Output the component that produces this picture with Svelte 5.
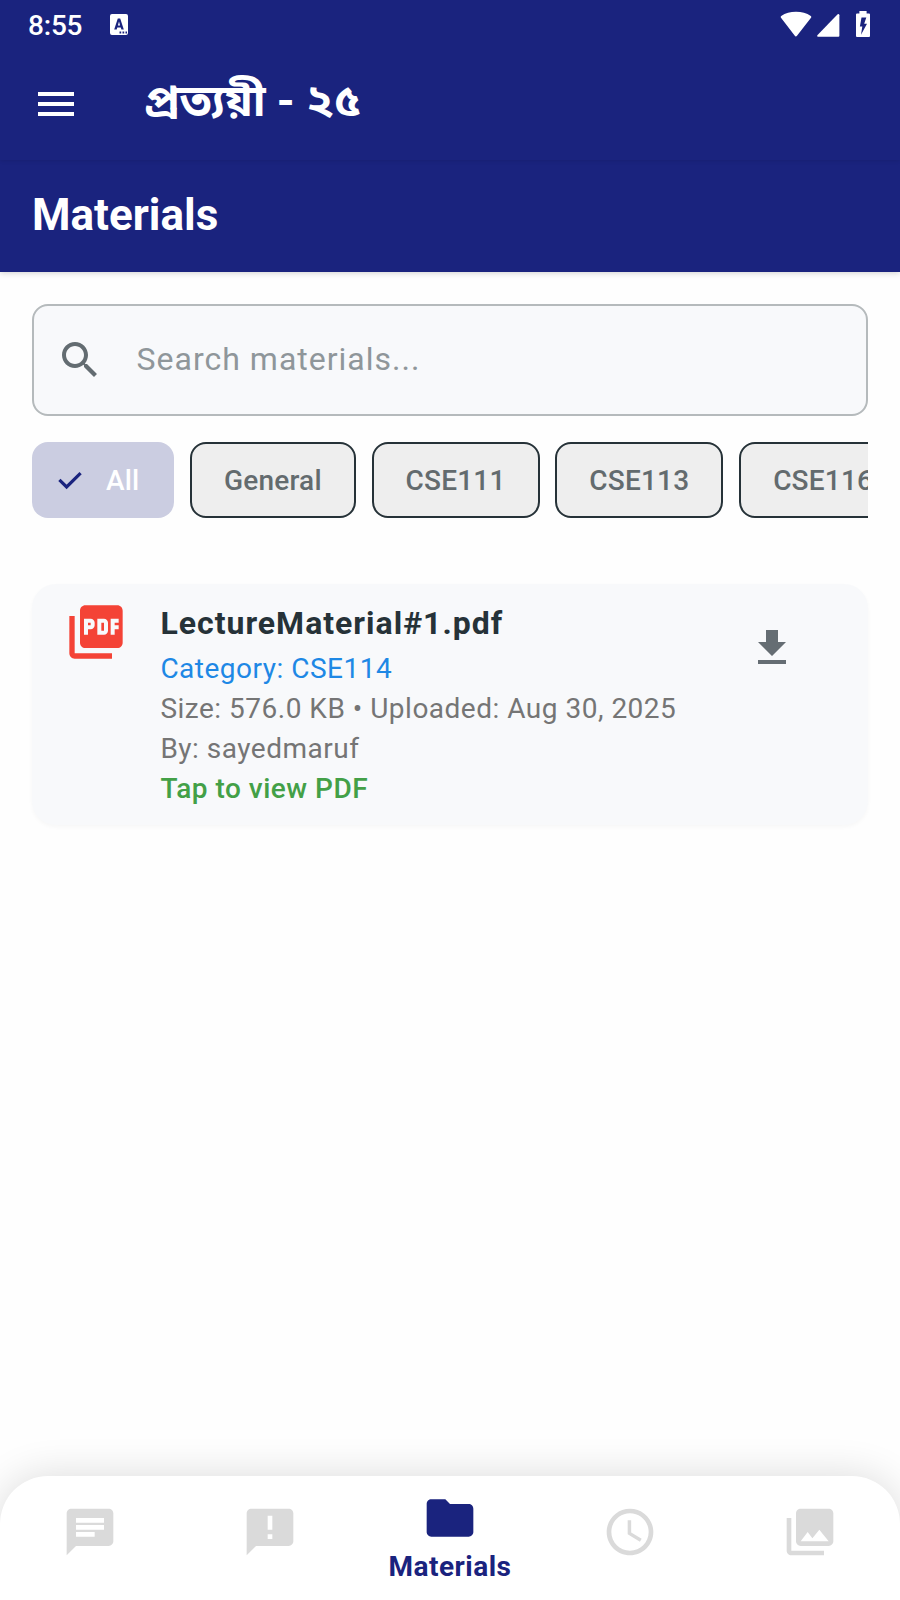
<script>
  let query = $state('');
  let selected = $state('All');
  const categories = ['All', 'General', 'CSE111', 'CSE113', 'CSE116'];
  const tabs = [
    { name: 'Chat', d: 'M20 2H4c-1.1 0-1.99.9-1.99 2L2 22l4-4h14c1.1 0 2-.9 2-2V4c0-1.1-.9-2-2-2zM6 9h12v2H6V9zm8 5H6v-2h8v2zm4-6H6V6h12v2z' },
    { name: 'Notices', d: 'M20 2H4c-1.1 0-1.99.9-1.99 2L2 22l4-4h14c1.1 0 2-.9 2-2V4c0-1.1-.9-2-2-2zm-7 13h-2v-2h2v2zm0-4h-2V5h2v6z' },
    { name: 'Materials', d: 'M10 4H4c-1.1 0-1.99.9-1.99 2L2 18c0 1.1.9 2 2 2h16c1.1 0 2-.9 2-2V8c0-1.1-.9-2-2-2h-8l-2-2z' },
    { name: 'Schedule', d: 'M11.99 2C6.47 2 2 6.48 2 12s4.47 10 9.99 10C17.52 22 22 17.52 22 12S17.52 2 11.99 2zM12 20c-4.42 0-8-3.58-8-8s3.58-8 8-8 8 3.58 8 8-3.58 8-8 8zM12.5 7H11v6l5.25 3.15.75-1.23-4.5-2.67z' },
    { name: 'Gallery', d: 'M22 16V4c0-1.1-.9-2-2-2H8c-1.1 0-2 .9-2 2v12c0 1.1.9 2 2 2h12c1.1 0 2-.9 2-2zm-11-4l2.03 2.71L16 11l4 5H8l3-4zM2 6v14c0 1.1.9 2 2 2h14v-2H4V6H2z' }
  ];
  let active = $state('Materials');
</script>

<div class="screen">
  <div class="appbar">
    <div class="status">
      <span class="time">8:55</span>
      <svg class="ime" width="18" height="21" viewBox="0 0 18 21">
        <path fill="#fff" fill-rule="evenodd" d="M2 0h14a2 2 0 0 1 2 2v17a2 2 0 0 1-2 2H2a2 2 0 0 1-2-2V2a2 2 0 0 1 2-2zM7.8 4.5 4.2 15.5h2.5l.6-2h3.5l.6 2h2.4L10.2 4.5zM9 7.4l1.1 4.1H7.9zM9.5 17.5v2h1.7v-2zm3 0v2h1.7v-2zm3 0v2h1.5v-2z" />
      </svg>
      <div class="signals">
        <svg width="32" height="26" viewBox="0 0 32 26"><path fill="#fff" d="M15.8 25.4Q16.5 25.4 17 24.7L31.2 6.4Q31.6 5.6 30.8 5 24.5.8 16 .8T1.2 5Q.4 5.6.8 6.4L14.8 24.7Q15.2 25.4 15.8 25.4z" /></svg>
        <svg width="23" height="26" viewBox="0 0 23 26"><path fill="#fff" d="M22.4 4.2v20.600a1 1 0 0 1-1 1H1.1Q-.6 25.4.6 24L20.4 3.600q1.6-1.2 2 .6z" /></svg>
        <svg class="battery" width="14" height="26" viewBox="0 0 14 26"><path fill="#fff" fill-rule="evenodd" d="M3.400 0h7.200v2.600H13a1 1 0 0 1 1 1V25a1 1 0 0 1-1 1H1a1 1 0 0 1-1-1V3.600a1 1 0 0 1 1-1h2.400zM5.500 6.500 3.900 15.400h2.400L5 23.800 11 12.800H8.200L10.300 6.500z" /></svg>
      </div>
    </div>
    <div class="toolbar">
      <svg width="48" height="48" viewBox="0 0 24 24"><path fill="#fff" d="M3 18h18v-2H3v2zm0-5h18v-2H3v2zm0-7v2h18V6H3z" /></svg>
      <span class="brand" lang="bn">প্রত্যয়ী - ২৫</span>
    </div>
  </div>

  <header><h1>Materials</h1></header>

  <main>
    <label class="search">
      <svg width="48" height="48" viewBox="0 0 24 24"><path fill="#636c71" d="M15.500 14h-.79l-.28-.27C15.410 12.590 16 11.110 16 9.500 16 5.910 13.090 3 9.500 3S3 5.910 3 9.500 5.910 16 9.500 16c1.610 0 3.090-.59 4.230-1.570l.27.28v.79l5 4.990L20.490 19l-4.990-5zm-6 0C7.010 14 5 11.990 5 9.500S7.010 5 9.500 5 14 7.010 14 9.500 11.990 14 9.500 14z" /></svg>
      <input type="text" placeholder="Search materials..." bind:value={query} />
    </label>

    <div class="chips">
      {#each categories as c}
        <button class="chip" class:on={selected === c} onclick={() => (selected = c)}>
          {#if selected === c}
            <svg width="36" height="36" viewBox="0 0 36 36"><path fill="none" stroke="#1a237e" stroke-width="3.200" d="m7.400 17.900 7.200 7L28.600 11.100" /></svg>
          {/if}
          <span>{c}</span>
        </button>
      {/each}
    </div>

    <article class="card">
      <svg class="pdf" width="64" height="64" viewBox="0 0 24 24"><path fill="#f44336" d="M20 2H8c-1.100 0-2 .9-2 2v12c0 1.100.9 2 2 2h12c1.100 0 2-.9 2-2V4c0-1.100-.9-2-2-2zm-8.500 7.500c0 .83-.67 1.500-1.500 1.500H9v2H7.500V7H10c.83 0 1.500.67 1.500 1.500v1zm5 2c0 .83-.67 1.500-1.500 1.500h-2.500V7H15c.83 0 1.500.67 1.500 1.500v3zm4-3H19v1h1.500V11H19v2h-1.500V7h3v1.500zM9 9.500h1v-1H9v1zM4 6H2v14c0 1.100.9 2 2 2h14v-2H4V6zm10 5.500h1v-3h-1v3z" /></svg>
      <div class="info">
        <h2>LectureMaterial#1.pdf</h2>
        <p class="cat">Category: CSE114</p>
        <p>Size: 576.0 KB • Uploaded: Aug 30, 2025</p>
        <p>By: sayedmaruf</p>
        <p class="tap">Tap to view PDF</p>
      </div>
      <svg class="download" width="48" height="48" viewBox="0 0 24 24"><path fill="#656d73" d="M19 9h-4V3H9v6H5l7 7 7-7zM5 18v2h14v-2H5z" /></svg>
    </article>
  </main>

  <nav>
    {#each tabs as t}
      <button class="tab" class:active={active === t.name} onclick={() => (active = t.name)}>
        <svg width="56" height="56" viewBox="0 0 24 24"><path fill="currentColor" d={t.d} /></svg>
        {#if active === t.name}<span>{t.name}</span>{/if}
      </button>
    {/each}
  </nav>
</div>

<style>
  :global(body) { background: #fefefe; }
  * { box-sizing: border-box; }
  svg { display: block; flex: none; }
  button { border: 0; background: none; padding: 0; font: inherit; }
  .screen {
    width: 900px; height: 1600px; overflow: hidden; display: flex; flex-direction: column;
    font-family: Roboto, 'Noto Sans Bengali', 'Noto Sans', sans-serif; background: #fefefe;
  }
  .appbar { height: 160px; background: #1a237e; color: #fff; box-shadow: 0 1px 4px rgba(0, 0, 0, .1); position: relative; z-index: 2; }
  .status { height: 48px; display: flex; align-items: center; padding: 0 30px 0 28px; }
  .time { font-size: 28px; font-weight: 500; line-height: 48px; padding-top: 3px; width: 82px; letter-spacing: -.2px; }
  .signals { margin-left: auto; display: flex; align-items: center; gap: 5px; padding-bottom: 1px; }
  .battery { margin-left: 11px; }
  .toolbar { display: flex; align-items: center; height: 112px; padding-left: 32px; }
  .brand { margin-left: 64px; padding-bottom: 6px; font-size: 44px; font-weight: 700; line-height: 56px; white-space: nowrap; transform: scaleX(1.034); transform-origin: 0 50%; }
  header { height: 112px; background: #1a237e; color: #fff; padding: 0 32px 2px; display: flex; align-items: center; box-shadow: 0 1px 6px rgba(0, 0, 0, .18); }
  h1 { margin: 0; font-size: 44px; font-weight: 700; line-height: 52px; }
  main { flex: 1; padding: 32px 32px 0; }
  .search { height: 112px; border: 2px solid #b5babc; border-radius: 16px; background: #f8f9fb; display: flex; align-items: center; padding-left: 22px; gap: 32.600px; }
  input { flex: 1; border: 0; outline: 0; background: none; padding: 0 0 2px; font: 400 32px/48px Roboto, sans-serif; letter-spacing: 1px; color: #263238; }
  input::placeholder { color: #8f969a; opacity: 1; }
  .chips { margin-top: 26px; display: flex; gap: 15.800px; overflow: hidden; }
  .chip { height: 76px; flex: none; border: 2px solid #263238; border-radius: 16px; background: #eee; color: #636b6e; padding: 0 32px; font-size: 28px; font-weight: 500; letter-spacing: .2px; display: flex; align-items: center; }
  .chip.on { border: 0; background: #cbcde1; color: #fff; padding: 0 34.800px 0 20px; gap: 18px; }
  .card { margin-top: 66px; height: 241px; background: #f8f9fb; border-radius: 24px; box-shadow: 0 2px 4px rgba(0, 0, 0, .03); display: flex; align-items: flex-start; padding: 16px 72px 0 32px; }
  .info { flex: 1; margin-left: 32.400px; padding-top: 0; }
  h2 { margin: -1px 0 2px; font-size: 32px; line-height: 48px; font-weight: 700; letter-spacing: 1px; color: #263238; }
  p { margin: 0; font-size: 28px; line-height: 40px; letter-spacing: .5px; color: #757575; white-space: nowrap; }
  .cat { color: #1e88e5; }
  .tap { color: #43a047; font-weight: 500; }
  .download { margin-top: 24px; }
  nav { height: 124px; background: #fff; border-radius: 48px 48px 0 0; box-shadow: 0 0 40px rgba(0, 0, 0, .14); display: flex; }
  .tab { flex: 1; color: #dadada; display: flex; flex-direction: column; align-items: center; padding-top: 28px; }
  .tab.active { color: #1a237e; padding-top: 14px; }
  .tab span { font-size: 28px; font-weight: 700; line-height: 42px; letter-spacing: .5px; }
</style>
